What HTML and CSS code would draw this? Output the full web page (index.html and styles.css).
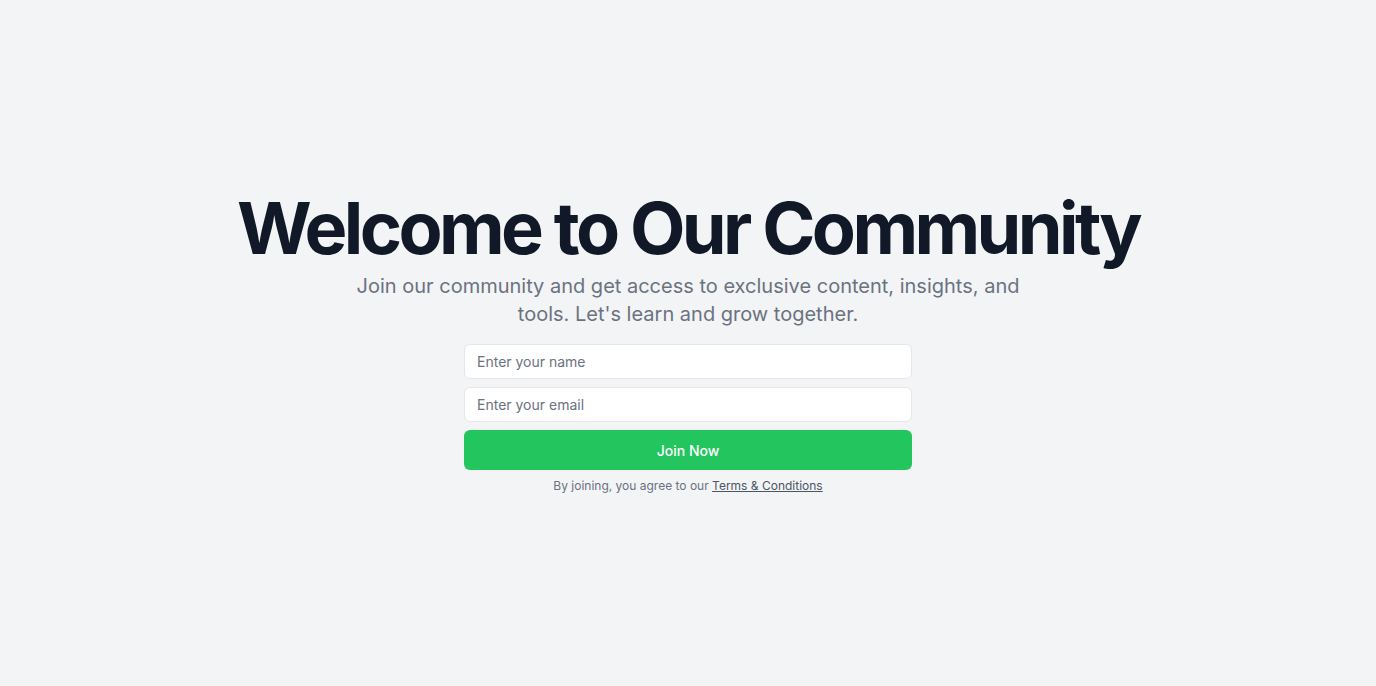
FILE: index.html
```html
<!DOCTYPE html>
<html lang="en">
<head>
<meta charset="utf-8">
<title>Welcome to Our Community</title>
<link rel="stylesheet" href="styles.css">
</head>
<body>
<main class="page">
  <section class="hero">
    <h1 class="title">Welcome to Our Community</h1>
    <p class="subtitle">Join our community and get access to exclusive content, insights, and tools. Let's learn and grow together.</p>
    <form class="form">
      <input class="field" type="text" placeholder="Enter your name">
      <input class="field" type="email" placeholder="Enter your email">
      <button class="btn" type="button">Join Now</button>
      <p class="terms">By joining, you agree to our <a href="#" class="link">Terms &amp; Conditions</a></p>
    </form>
  </section>
</main>
</body>
</html>
```
FILE: styles.css
```css
* { box-sizing: border-box; }
html, body { margin: 0; padding: 0; }
body {
  background: #f3f4f6;
  font-family: Inter, "Noto Sans", sans-serif;
  color: #111827;
}
.page {
  min-height: 686px;
  display: flex;
  align-items: center;
  justify-content: center;
}
.hero {
  display: flex;
  flex-direction: column;
  align-items: center;
  text-align: center;
}
.title {
  margin: 0 0 8px;
  font-size: 72px;
  line-height: 72px;
  font-weight: 700;
  letter-spacing: -0.05em;
  color: #111827;
}
.subtitle {
  margin: 0 0 16px;
  max-width: 672px;
  font-size: 20px;
  line-height: 28px;
  color: #6b7280;
}
.form {
  width: 448px;
  display: flex;
  flex-direction: column;
  gap: 8px;
  margin: 0;
}
.field {
  width: 100%;
  height: 35px;
  padding: 6px 12px;
  border: 1px solid #e5e7eb;
  border-radius: 6px;
  background: #fff;
  font-family: inherit;
  font-size: 14px;
  color: #111827;
  outline: none;
}
.field::placeholder { color: #6b7280; }
.btn {
  height: 40px;
  border: none;
  border-radius: 6px;
  background: #22c55e;
  color: #fff;
  font-family: inherit;
  font-size: 14px;
  font-weight: 500;
  cursor: pointer;
}
.terms {
  margin: 0;
  font-size: 12px;
  line-height: 16px;
  color: #6b7280;
}
.link {
  color: #4b5563;
  text-decoration: underline;
}
```
